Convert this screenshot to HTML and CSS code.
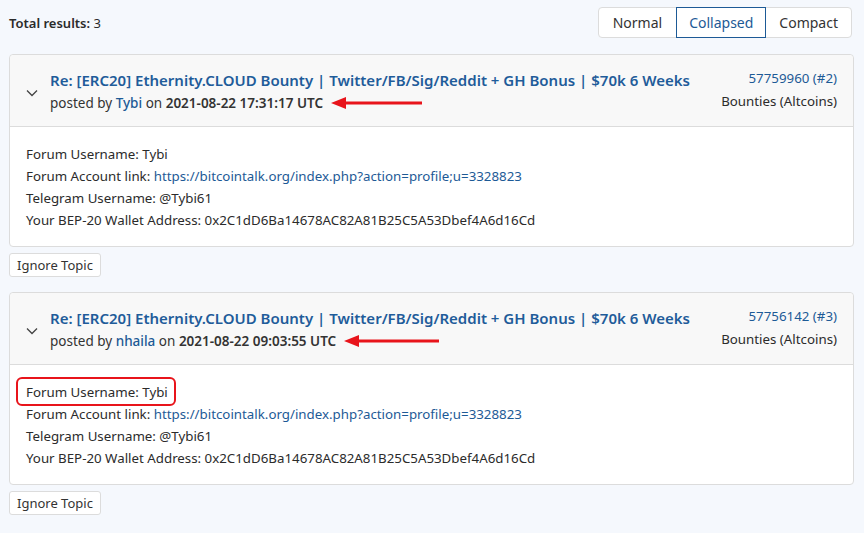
FILE: index.html
```html
<!DOCTYPE html>
<html lang="en">
<head>
  <meta charset="UTF-8">
  <title>Search results</title>
  <link rel="stylesheet" href="styles.css">
</head>
<body>

  <div class="topbar">
    <div class="total"><b>Total results:</b> 3</div>
    <div class="view-toggle">
      <button>Normal</button>
      <button class="active">Collapsed</button>
      <button>Compact</button>
    </div>
  </div>

  <div class="post">
    <div class="post-head">
      <svg class="chevron" width="12" height="8" viewBox="0 0 12 8"><path d="M1 1.5l5 5 5-5" fill="none" stroke="#444" stroke-width="1.3"/></svg>
      <div class="post-info">
        <a class="post-title" href="#">Re: [ERC20] Ethernity.CLOUD Bounty | Twitter/FB/Sig/Reddit + GH Bonus | $70k 6 Weeks</a>
        <div class="posted">posted by <a href="#">Tybi</a> on <span class="date">2021-08-22 17:31:17 UTC</span><svg class="arrow" width="92" height="14" viewBox="0 0 92 14"><path d="M0 7L15 1V13Z" fill="#e8141b"/><path d="M14 7H91" stroke="#e8141b" stroke-width="3"/></svg></div>
      </div>
      <div class="post-meta">
        <a href="#">57759960 (#2)</a>
        <div>Bounties (Altcoins)</div>
      </div>
    </div>
    <div class="post-body">
      <div>Forum Username: Tybi</div>
      <div>Forum Account link: <a href="#">https://bitcointalk.org/index.php?action=profile;u=3328823</a></div>
      <div>Telegram Username: @Tybi61</div>
      <div>Your BEP-20 Wallet Address: 0x2C1dD6Ba14678AC82A81B25C5A53Dbef4A6d16Cd</div>
    </div>
  </div>
  <button class="ignore-btn">Ignore Topic</button>

  <div class="post">
    <div class="post-head">
      <svg class="chevron" width="12" height="8" viewBox="0 0 12 8"><path d="M1 1.5l5 5 5-5" fill="none" stroke="#444" stroke-width="1.3"/></svg>
      <div class="post-info">
        <a class="post-title" href="#">Re: [ERC20] Ethernity.CLOUD Bounty | Twitter/FB/Sig/Reddit + GH Bonus | $70k 6 Weeks</a>
        <div class="posted">posted by <a href="#">nhaila</a> on <span class="date">2021-08-22 09:03:55 UTC</span><svg class="arrow" width="96" height="14" viewBox="0 0 96 14"><path d="M0 7L15 1V13Z" fill="#e8141b"/><path d="M14 7H95" stroke="#e8141b" stroke-width="3"/></svg></div>
      </div>
      <div class="post-meta">
        <a href="#">57756142 (#3)</a>
        <div>Bounties (Altcoins)</div>
      </div>
    </div>
    <div class="post-body">
      <div><span class="marked">Forum Username: Tybi</span></div>
      <div>Forum Account link: <a href="#">https://bitcointalk.org/index.php?action=profile;u=3328823</a></div>
      <div>Telegram Username: @Tybi61</div>
      <div>Your BEP-20 Wallet Address: 0x2C1dD6Ba14678AC82A81B25C5A53Dbef4A6d16Cd</div>
    </div>
  </div>
  <button class="ignore-btn">Ignore Topic</button>

</body>
</html>
```

FILE: styles.css
```css
:root {
  --link: #1d5a96;
  --text: #2b2b2b;
  --border: #dcdcdc;
}

* {
  box-sizing: border-box;
}

body {
  margin: 0;
  padding: 7px 10px 0 9px;
  background: #f5f8fd;
  color: var(--text);
  font-family: 'Noto Sans', 'Open Sans', sans-serif;
  font-size: 13.3px;
}

a {
  color: var(--link);
  text-decoration: none;
}

.topbar {
  display: flex;
  justify-content: space-between;
  align-items: center;
  margin-bottom: 16px;
}

.total {
  font-size: 13px;
}

.total b {
  font-weight: 600;
}

.view-toggle {
  display: flex;
  margin-right: 2px;
  background: white;
  border: 1px solid var(--border);
  border-radius: 4px;
}

.view-toggle button {
  font: inherit;
  font-size: 14px;
  color: #333;
  background: none;
  border: 1px solid transparent;
  height: 31px;
  margin: -1px 0;
  padding: 0 12px;
  cursor: pointer;
}

.view-toggle button:first-child {
  padding: 0 13px;
}

.view-toggle button.active {
  border-color: #1d5a96;
  color: #1d5a96;
}

.post {
  background: white;
  border: 1px solid var(--border);
  border-radius: 4px;
}

.post-head {
  display: flex;
  align-items: center;
  background: #f8f8f8;
  border-bottom: 1px solid var(--border);
  border-radius: 4px 4px 0 0;
  padding: 14px 16px 12px 16px;
}

.chevron {
  flex: none;
  margin: 3px 12px 0 0;
}

.post-info {
  flex: 1;
  line-height: 22px;
}

.post-title {
  font-size: 15px;
  font-weight: 600;
  color: #1f5c9a;
}

.posted {
  font-size: 13.5px;
  color: #333;
}

.posted a {
  font-weight: 500;
}

.date {
  font-weight: 600;
}

.arrow {
  vertical-align: middle;
  margin: -3px 0 0 8px;
}

.post-meta {
  align-self: flex-start;
  text-align: right;
  line-height: 23px;
  margin-top: -2px;
}

.post-body {
  padding: 16px 16px 15px;
  line-height: 22px;
}

.marked {
  position: relative;
}

.marked::after {
  content: '';
  position: absolute;
  top: -6px;
  bottom: -5px;
  left: -10px;
  right: -8px;
  border: 2px solid #e8141b;
  border-radius: 6px;
}

.ignore-btn {
  font: inherit;
  font-size: 13px;
  color: #333;
  background: white;
  border: 1px solid var(--border);
  border-radius: 3px;
  height: 24px;
  padding: 0 7px;
  margin: 6px 0 15px;
  cursor: pointer;
}
```
